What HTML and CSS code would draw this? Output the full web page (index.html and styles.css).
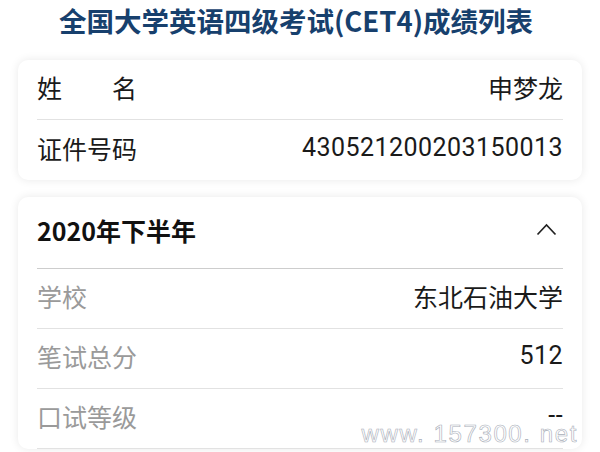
FILE: index.html
```html
<!DOCTYPE html>
<html lang="zh">
<head>
<meta charset="utf-8">
<title>全国大学英语四级考试(CET4)成绩列表</title>
<link rel="stylesheet" href="styles.css">
</head>
<body>
<div class="page">
  <h1 class="title">全国大学英语四级考试(CET4)成绩列表</h1>
  <section class="card">
    <div class="row">
      <span class="label label-justify"><span>姓</span><span>名</span></span>
      <span class="value">申梦龙</span>
    </div>
    <div class="row">
      <span class="label">证件号码</span>
      <span class="value num">430521200203150013</span>
    </div>
  </section>
  <section class="card card-exam">
    <div class="exam-head">
      <span class="exam-title">2020年下半年</span>
      <svg class="chevron" width="21" height="13" viewBox="0 0 21 13"><polyline points="1.5,11.5 10.5,2 19.5,11.5" fill="none" stroke="#222" stroke-width="1.7"/></svg>
    </div>
    <div class="row">
      <span class="label muted">学校</span>
      <span class="value">东北石油大学</span>
    </div>
    <div class="row">
      <span class="label muted">笔试总分</span>
      <span class="value num">512</span>
    </div>
    <div class="row">
      <span class="label muted">口试等级</span>
      <span class="value num">--</span>
    </div>
  </section>
  <div class="watermark">www. 157300. net</div>
</div>
</body>
</html>
```
FILE: styles.css
```css
html, body {
  margin: 0;
  padding: 0;
  background: #ffffff;
}
.page {
  position: relative;
  width: 600px;
  height: 452px;
  overflow: hidden;
  font-family: "Noto Sans CJK SC", "Noto Sans", sans-serif;
}
.title {
  margin: 0;
  padding-right: 8px;
  height: 40px;
  line-height: 40px;
  text-align: center;
  font-size: 27.5px;
  font-weight: 700;
  color: #17406d;
}
.card {
  margin: 20px 18px 0;
  padding: 0 19px;
  background: #fff;
  border-radius: 10px;
  box-shadow: 0 0 10px rgba(0, 0, 0, 0.09);
}
.card-exam {
  margin-top: 17px;
}
.row {
  display: flex;
  justify-content: space-between;
  align-items: center;
  box-sizing: border-box;
  height: 60px;
  padding-bottom: 5px;
  border-bottom: 1px solid #e2e2e2;
  font-size: 25px;
  line-height: 30px;
  color: #1a1a1a;
}
.card > .row:last-child {
  border-bottom: none;
}
.card-exam > .row:last-child {
  border-bottom: 1px solid #e2e2e2;
}
.label-justify {
  display: flex;
  justify-content: space-between;
  width: 100px;
}
.muted {
  color: #9a9a9a;
}
.num {
  font-family: "Roboto", "Noto Sans", sans-serif;
  letter-spacing: 0.45px;
}
.exam-head {
  display: flex;
  justify-content: space-between;
  align-items: center;
  box-sizing: border-box;
  height: 72px;
  padding-bottom: 6px;
  border-bottom: 1px solid #cdcdcd;
}
.exam-title {
  font-size: 25px;
  line-height: 30px;
  font-weight: 700;
  color: #111;
}
.chevron {
  margin-right: 6px;
}
.watermark {
  position: absolute;
  right: 22px;
  bottom: 6px;
  font-family: "Liberation Sans", sans-serif;
  font-size: 24px;
  line-height: 24px;
  letter-spacing: 1.6px;
  color: rgba(255, 255, 255, 0.9);
  -webkit-text-stroke: 0.6px #a8aeb8;
}
```
